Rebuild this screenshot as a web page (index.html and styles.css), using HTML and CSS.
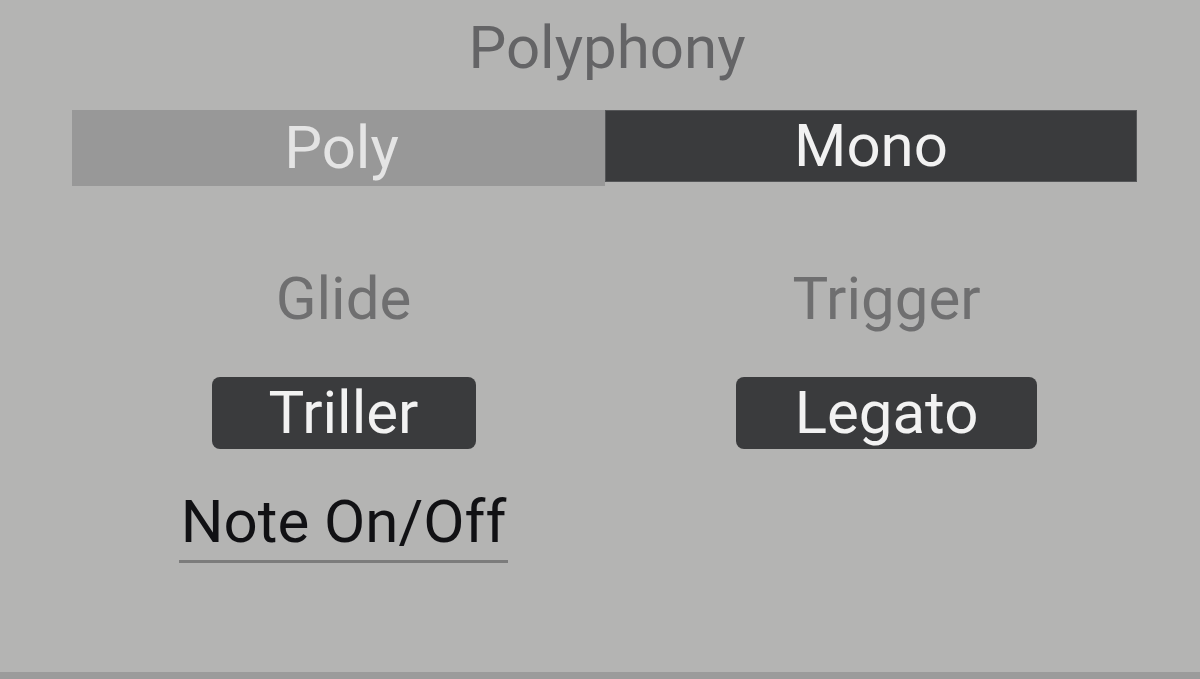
FILE: index.html
```html
<!DOCTYPE html>
<html>
<head>
<meta charset="utf-8">
<link rel="stylesheet" href="styles.css">
</head>
<body>
<div class="panel">
  <div class="title">Polyphony</div>
  <div class="segmented">
    <div class="seg seg-off">Poly</div>
    <div class="seg seg-on">Mono</div>
  </div>
  <div class="columns">
    <div class="col">
      <div class="label">Glide</div>
      <div class="btn btn-triller">Triller</div>
      <div class="link">Note On/Off</div>
    </div>
    <div class="col">
      <div class="label">Trigger</div>
      <div class="btn btn-legato">Legato</div>
    </div>
  </div>
</div>
</body>
</html>
```
FILE: styles.css
```css
html, body {
  margin: 0;
  padding: 0;
}
body {
  background: #b4b4b3;
  font-family: Roboto, "Liberation Sans", sans-serif;
  font-size: 60px;
}
.panel {
  box-sizing: border-box;
  width: 1200px;
  height: 679px;
  border-bottom: 7px solid #9b9b9b;
  padding-top: 13px;
}
.title {
  text-align: center;
  line-height: 70px;
  color: #646466;
  padding-left: 14px;
}
.segmented {
  display: flex;
  align-items: flex-start;
  margin: 27px 0 0 72px;
  width: 1065px;
}
.seg {
  text-align: center;
  box-sizing: border-box;
}
.seg-off {
  width: 533px;
  background: #989898;
  color: #e4e4e4;
  height: 76px;
  line-height: 76px;
  text-indent: 6px;
}
.seg-on {
  width: 532px;
  background: #3a3b3d;
  color: #f2f2f2;
  height: 72px;
  border: 1px solid #555658;
  line-height: 70px;
}
.columns {
  display: grid;
  grid-template-columns: 543px 543px;
  padding-left: 72px;
  margin-top: 78px;
}
.col {
  display: flex;
  flex-direction: column;
  align-items: center;
}
.label {
  line-height: 70px;
  color: #6f6f70;
}
.btn {
  margin-top: 43px;
  height: 72px;
  line-height: 72px;
  background: #3a3b3d;
  color: #f2f2f2;
  border-radius: 8px;
  text-align: center;
}
.btn-triller {
  width: 264px;
}
.btn-legato {
  width: 301px;
}
.link {
  margin-top: 38px;
  color: #111114;
  border-bottom: 3px solid #7c7c7c;
  padding: 0 2px 0 2px;
  height: 76px;
  box-sizing: border-box;
  line-height: 70px;
}
```
